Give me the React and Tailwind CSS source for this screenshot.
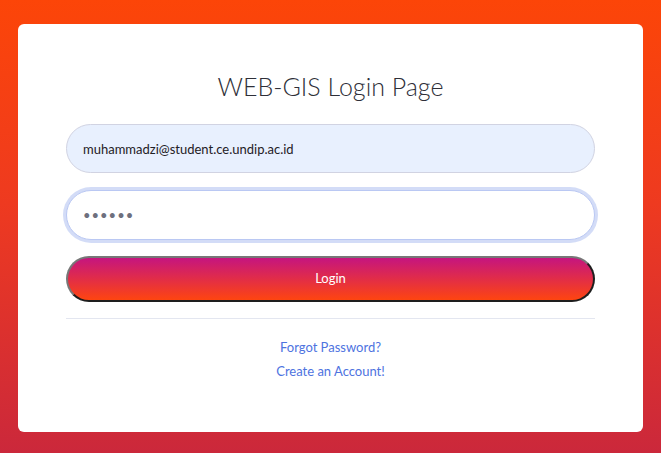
import React from 'react';

const font = { fontFamily: 'Lato, "Noto Sans", sans-serif' };

export default function App() {
    return (
        <div className="min-h-[453px] w-full bg-[linear-gradient(to_bottom,#fc4508_0%,#ee3a20_45%,#cb283b_100%)] px-[18px] pt-6 pb-[21px]" style={font}>
            <div className="bg-white rounded-md h-[408px] px-12 pt-[48px]">
                <h1 className="text-center text-[25px] font-light leading-7 text-[#2e2f38] mb-[24px]">WEB-GIS Login Page</h1>
                <form className="flex flex-col" onSubmit={(e) => e.preventDefault()}>
                    <input
                        type="email"
                        defaultValue="muhammadzi@student.ce.undip.ac.id"
                        className="h-[49px] rounded-full border border-[#d1d3e2] bg-[#e8f0fe] px-4 text-[13px] text-[#1f2025] outline-none"
                    />
                    <input
                        type="password"
                        defaultValue="123456"
                        className="mt-[17px] h-[50px] rounded-full border border-[#bac8f3] bg-white px-4 text-[13px] text-[#6e707e] outline-none shadow-[0_0_0_3px_rgba(78,115,223,0.25)] tracking-[1px]"
                    />
                    <button
                        type="submit"
                        className="mt-4 h-[46px] rounded-full border-2 border-t-[#777] border-l-[#777] border-b-[#1e1e1e] border-r-[#1e1e1e] bg-[linear-gradient(to_bottom,#c5157f,#fe4510)] text-white text-[13px]"
                    >
                        Login
                    </button>
                </form>
                <hr className="mt-4 border-t border-[#e3e6f0]" />
                <div className="mt-[20px] flex flex-col items-center gap-[7px] text-[13px] text-[#4e73df] leading-[17px]">
                    <a href="#">Forgot Password?</a>
                    <a href="#">Create an Account!</a>
                </div>
            </div>
        </div>
    );
}
